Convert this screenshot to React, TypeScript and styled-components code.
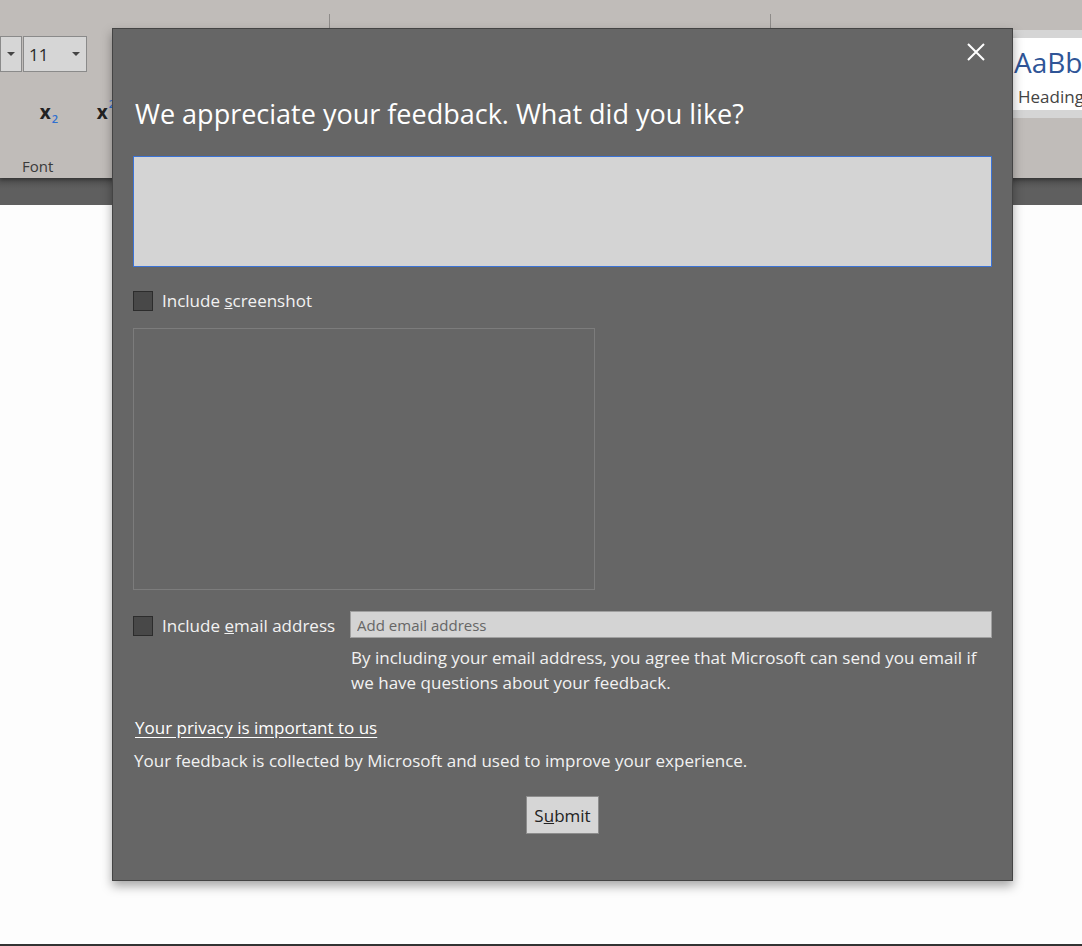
import styled, { createGlobalStyle } from "styled-components";

const GlobalStyle = createGlobalStyle`
  html, body {
    margin: 0;
    padding: 0;
    background: #fdfdfd;
  }
  body {
    font-family: "Segoe UI", "Open Sans", "Noto Sans", sans-serif;
  }
`;

const Screen = styled.div`
  position: relative;
  width: 1082px;
  height: 946px;
  overflow: hidden;
  display: flex;
  flex-direction: column;
  background: #fdfdfd;
`;

const Ribbon = styled.div`
  height: 178px;
  background: #c0bcb9;
  display: flex;
  box-shadow: 0 2px 4px rgba(0, 0, 0, 0.35);
  position: relative;
  z-index: 1;
`;

const Group = styled.div<{ $width: number }>`
  width: ${(p) => p.$width}px;
  flex: none;
  display: flex;
  flex-direction: column;
  border-right: 1px solid #8e8b89;
  margin-top: 14px;
  margin-bottom: 1px;
`;

const GroupBody = styled.div`
  flex: 1;
  display: flex;
  flex-direction: column;
  padding-top: 22px;
`;

const GroupLabel = styled.div`
  font-size: 15px;
  line-height: 22px;
  color: #3a3a3a;
  padding-left: 22px;
  height: 22px;
`;

const ToolRow = styled.div<{ $top?: number }>`
  display: flex;
  align-items: center;
  gap: 1px;
  margin-top: ${(p) => p.$top ?? 0}px;
`;

const Dropdown = styled.div<{ $width: number; $end?: boolean }>`
  width: ${(p) => p.$width}px;
  height: 36px;
  box-sizing: border-box;
  border: 1px solid #8a8a8a;
  background: #d6d6d6;
  display: flex;
  align-items: center;
  justify-content: ${(p) => (p.$end ? "flex-end" : "space-between")};
  padding: 0 6px 0 5px;
  font-size: 17px;
  color: #2a2a2a;
`;

const Caret = styled.span`
  width: 0;
  height: 0;
  border-left: 4px solid transparent;
  border-right: 4px solid transparent;
  border-top: 4px solid #444;
`;

const Spacer = styled.div<{ $width: number }>`
  width: ${(p) => p.$width}px;
  flex: none;
`;

const ScriptButton = styled.div`
  width: 56px;
  height: 40px;
  display: flex;
  align-items: center;
  justify-content: center;
  font-family: "Open Sans", sans-serif;
  font-weight: 700;
  font-size: 19px;
  color: #222;
`;

const Sub = styled.span<{ $up?: boolean }>`
  font-size: 11px;
  font-weight: 600;
  color: #2f6fd0;
  position: relative;
  top: ${(p) => (p.$up ? "-9px" : "6px")};
  margin-left: 1px;
`;

const Gallery = styled.div`
  margin-top: 30px;
  margin-left: 241px;
  flex: 1;
  height: 88px;
  background: #d5d5d5;
  padding: 8px 0;
  box-sizing: border-box;
`;

const StyleTile = styled.div`
  height: 100%;
  background: #ffffff;
  padding: 6px 0 0 2px;
  box-sizing: border-box;
  display: flex;
  flex-direction: column;
  white-space: nowrap;
`;

const StyleSample = styled.div`
  font-size: 28px;
  line-height: 36px;
  color: #2f5597;
  font-family: "Open Sans", sans-serif;
`;

const StyleName = styled.div`
  margin-top: 5px;
  font-size: 17px;
  line-height: 24px;
  color: #444;
  padding-left: 4px;
`;

const Band = styled.div`
  height: 27px;
  background: linear-gradient(#4f4f4f, #5f5f5f 40%, #5f5f5f);
`;

const Page = styled.div`
  flex: 1;
  background: #fdfdfd;
  border-bottom: 2px solid #333;
`;

const Dialog = styled.div`
  position: absolute;
  left: 112px;
  top: 28px;
  width: 901px;
  height: 853px;
  box-sizing: border-box;
  background: #666666;
  border: 1px solid #444;
  box-shadow: 0 5px 10px rgba(0, 0, 0, 0.35);
  z-index: 2;
  padding: 65px 20px 0 20px;
  color: #f2f2f2;
  display: flex;
  flex-direction: column;
`;

const Close = styled.button`
  position: absolute;
  top: 12px;
  right: 25px;
  width: 22px;
  height: 22px;
  padding: 0;
  border: none;
  background: none;
  display: flex;
  align-items: center;
  justify-content: center;
`;

const Title = styled.h1`
  margin: 0 0 0 2px;
  font-weight: 400;
  font-size: 27px;
  line-height: 40px;
  color: #ffffff;
`;

const Feedback = styled.textarea`
  margin-top: 22px;
  height: 111px;
  box-sizing: border-box;
  background: #d4d4d4;
  border: 1px solid #3b73d6;
  resize: none;
  outline: none;
`;

const CheckRow = styled.label<{ $top: number }>`
  margin-top: ${(p) => p.$top}px;
  display: flex;
  align-items: center;
  gap: 9px;
  font-size: 17px;
  color: #f2f2f2;
  white-space: nowrap;
`;

const Box = styled.span`
  width: 20px;
  height: 20px;
  box-sizing: border-box;
  background: #484848;
  border: 1px solid #2c2c2c;
  flex: none;
`;

const Preview = styled.div`
  margin-top: 16px;
  width: 462px;
  height: 262px;
  box-sizing: border-box;
  border: 1px solid #7c7c7c;
`;

const EmailRow = styled.div`
  margin-top: 21px;
  display: flex;
  align-items: flex-start;
  gap: 15px;
`;

const EmailCol = styled.div`
  flex: 1;
  display: flex;
  flex-direction: column;
`;

const EmailInput = styled.input`
  height: 27px;
  box-sizing: border-box;
  background: #d4d4d4;
  border: 1px solid #a0a0a0;
  font-family: inherit;
  font-size: 15px;
  padding: 0 6px;
  outline: none;
  &::placeholder {
    color: #666;
  }
`;

const Note = styled.p`
  margin: 7px 0 0 1px;
  font-size: 17px;
  line-height: 25px;
  color: #f2f2f2;
`;

const PrivacyLink = styled.a`
  margin: 21px 0 0 2px;
  align-self: flex-start;
  font-size: 17px;
  color: #ffffff;
  text-decoration: underline;
  text-underline-offset: 3px;
`;

const Body = styled.p`
  margin: 10px 0 0 1px;
  font-size: 17px;
  color: #f2f2f2;
`;

const Submit = styled.button`
  margin-top: 24px;
  align-self: center;
  width: 73px;
  height: 38px;
  box-sizing: border-box;
  background: #d6d6d6;
  border: 1px solid #8c8c8c;
  font-family: inherit;
  font-size: 17px;
  color: #222;
  padding: 0;
`;

export default function App() {
  return (
    <>
      <GlobalStyle />
      <Screen>
        <Ribbon>
          <Group $width={329}>
            <GroupBody>
              <ToolRow>
                <Dropdown $width={22} $end>
                  <Caret />
                </Dropdown>
                <Dropdown $width={64}>
                  11
                  <Caret />
                </Dropdown>
              </ToolRow>
              <ToolRow $top={20}>
                <Spacer $width={20} />
                <ScriptButton>
                  x<Sub>2</Sub>
                </ScriptButton>
                <ScriptButton>
                  x<Sub $up>2</Sub>
                </ScriptButton>
              </ToolRow>
            </GroupBody>
            <GroupLabel>Font</GroupLabel>
          </Group>
          <Group $width={440} />
          <Gallery>
            <StyleTile>
              <StyleSample>AaBbC</StyleSample>
              <StyleName>Heading 1</StyleName>
            </StyleTile>
          </Gallery>
        </Ribbon>
        <Band />
        <Page />

        <Dialog>
          <Close aria-label="Close">
            <svg width="18" height="18" viewBox="0 0 18 18">
              <path d="M1 1 L17 17 M17 1 L1 17" stroke="#ffffff" strokeWidth="2" />
            </svg>
          </Close>
          <Title>We appreciate your feedback. What did you like?</Title>
          <Feedback />
          <CheckRow $top={22}>
            <Box />
            <span>
              Include <u>s</u>creenshot
            </span>
          </CheckRow>
          <Preview />
          <EmailRow>
            <CheckRow $top={3}>
              <Box />
              <span>
                Include <u>e</u>mail address
              </span>
            </CheckRow>
            <EmailCol>
              <EmailInput placeholder="Add email address" />
              <Note>
                By including your email address, you agree that Microsoft can send you email if
                we have questions about your feedback.
              </Note>
            </EmailCol>
          </EmailRow>
          <PrivacyLink href="#">Your privacy is important to us</PrivacyLink>
          <Body>Your feedback is collected by Microsoft and used to improve your experience.</Body>
          <Submit>
            S<u>u</u>bmit
          </Submit>
        </Dialog>
      </Screen>
    </>
  );
}
